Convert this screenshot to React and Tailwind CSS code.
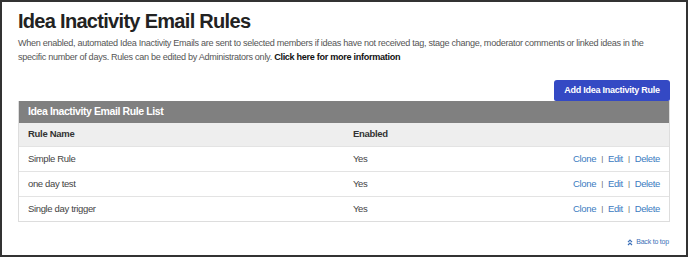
import React from "react";

const rules = [
  { name: "Simple Rule", enabled: "Yes" },
  { name: "one day test", enabled: "Yes" },
  { name: "Single day trigger", enabled: "Yes" },
];

const RuleRow = ({ rule }) => (
  <div className="flex items-center h-[25px] border-t border-[#e3e3e3] text-[9.5px] tracking-[-0.35px] text-[#444]">
    <div className="w-[334px] pl-[9px]">{rule.name}</div>
    <div className="flex-1">{rule.enabled}</div>
    <div className="pr-[9px] text-[#3b7bbf] flex items-center gap-[5px]">
      <a className="cursor-pointer">Clone</a>
      <span className="text-[#666] text-[8px]">|</span>
      <a className="cursor-pointer">Edit</a>
      <span className="text-[#666] text-[8px]">|</span>
      <a className="cursor-pointer">Delete</a>
    </div>
  </div>
);

const App = () => {
  return (
    <div
      className="w-[688px] h-[257px] border-2 border-[#333] bg-white px-[16px] overflow-hidden"
      style={{ fontFamily: "'Liberation Sans', Arial, sans-serif" }}
    >
      <h1 className="mt-[6px] text-[20px] leading-[26px] font-bold text-[#222] tracking-[-0.7px]">
        Idea Inactivity Email Rules
      </h1>
      <p className="mt-[2px] text-[9.1px] leading-[14px] tracking-[-0.3px] text-[#555] whitespace-nowrap">
        When enabled, automated Idea Inactivity Emails are sent to selected members if ideas have not received tag, stage change, moderator comments or linked ideas in the
        <br />
        specific number of days. Rules can be edited by Administrators only.{" "}
        <a className="font-bold text-[#111] cursor-pointer">Click here for more information</a>
      </p>

      <div className="flex justify-end mt-[16px]">
        <button className="w-[116px] h-[21px] bg-[#3449c4] text-white text-[9px] tracking-[-0.25px] font-bold rounded-t-[3px] rounded-b-[2px]">
          Add Idea Inactivity Rule
        </button>
      </div>

      <div className="border border-[#ddd] border-t-0">
        <div className="h-[22px] bg-[#808080] flex items-center pl-[9px] text-white text-[10.5px] tracking-[-0.4px] font-bold">
          Idea Inactivity Email Rule List
        </div>
        <div className="h-[23px] bg-[#eeeeee] flex items-center text-[9.5px] tracking-[-0.3px] font-bold text-[#333]">
          <div className="w-[334px] pl-[9px]">Rule Name</div>
          <div className="flex-1">Enabled</div>
        </div>
        {rules.map((rule) => (
          <RuleRow key={rule.name} rule={rule} />
        ))}
      </div>

      <div className="flex justify-end mt-[15px] pr-[1px] items-center gap-[3px] text-[7px] leading-[10px] tracking-[-0.2px] text-[#3b6fb8]">
        <svg width="6" height="7" viewBox="0 0 6 7" fill="none" stroke="#3b6fb8" strokeWidth="1.2">
          <path d="M1 3.2 L3 1.2 L5 3.2" />
          <path d="M1 6 L3 4 L5 6" />
        </svg>
        <span>Back to top</span>
      </div>
    </div>
  );
};

export default App;
